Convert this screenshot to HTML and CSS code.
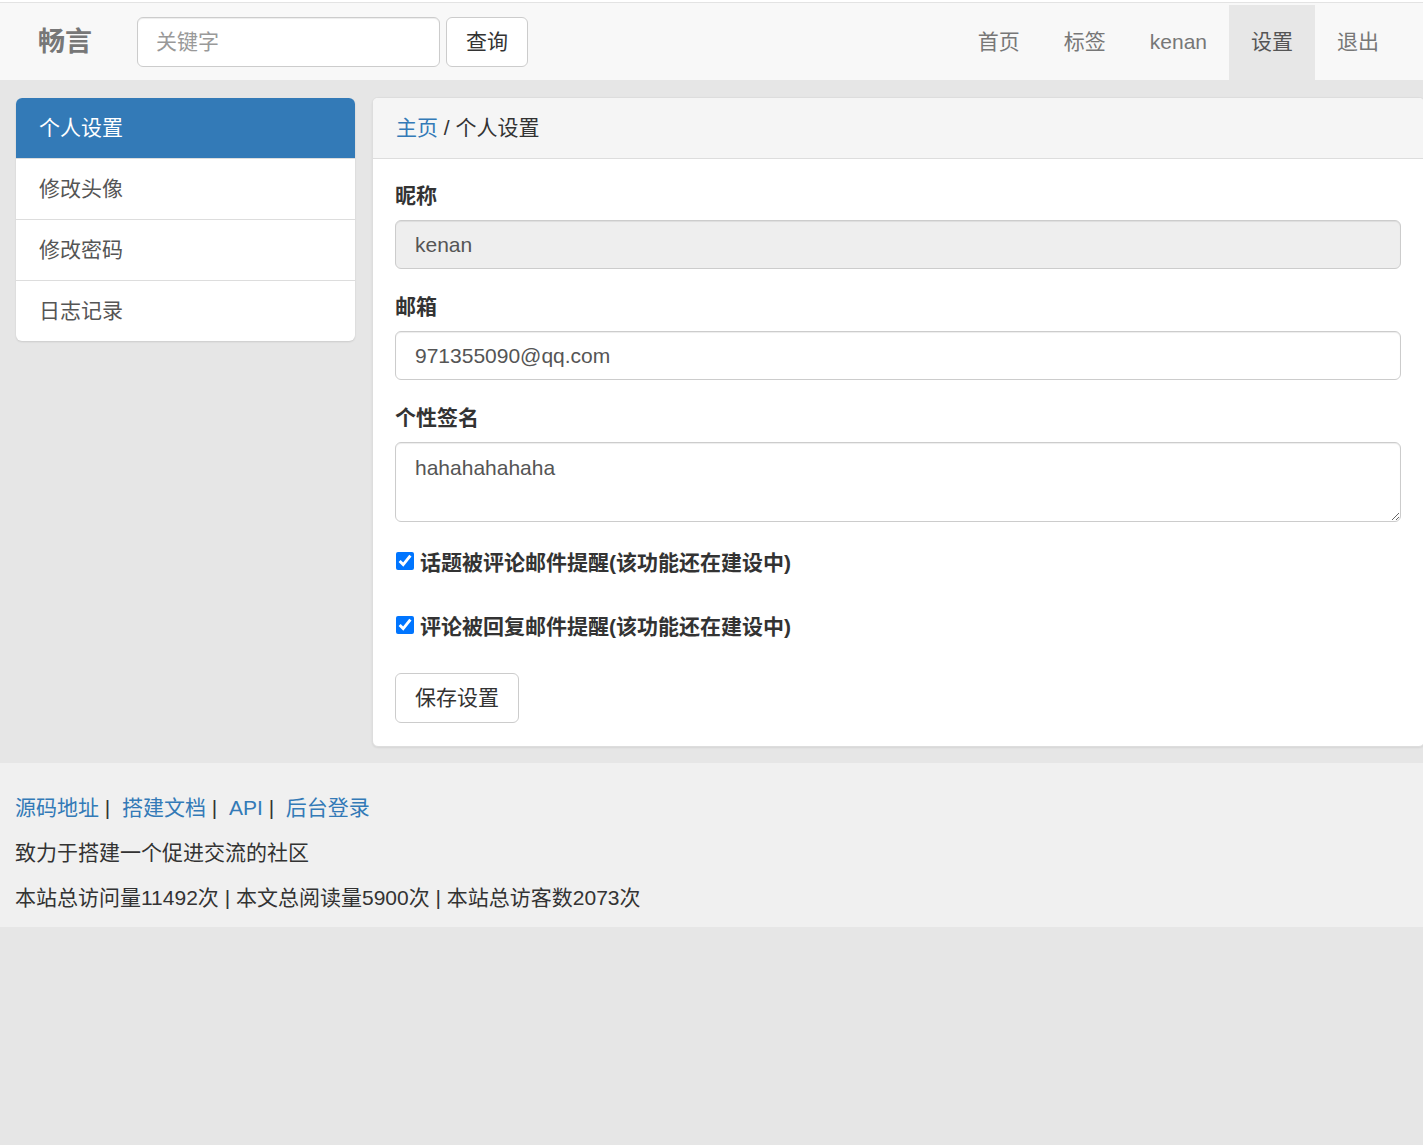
FILE: index.html
```html
<!DOCTYPE html>
<html lang="zh-CN">
<head>
<meta charset="utf-8">
<title>畅言 - 个人设置</title>
<link rel="stylesheet" href="styles.css">
</head>
<body>
<div class="topline"></div>
<nav class="navbar">
  <a class="brand" href="#">畅言</a>
  <form class="search">
    <input class="search-input" type="text" placeholder="关键字">
    <button class="btn" type="button">查询</button>
  </form>
  <ul class="nav">
    <li><a href="#">首页</a></li>
    <li><a href="#">标签</a></li>
    <li><a href="#">kenan</a></li>
    <li class="active"><a href="#">设置</a></li>
    <li><a href="#">退出</a></li>
  </ul>
</nav>

<main class="main">
  <aside class="list-group">
    <a class="list-item active" href="#">个人设置</a>
    <a class="list-item" href="#">修改头像</a>
    <a class="list-item" href="#">修改密码</a>
    <a class="list-item" href="#">日志记录</a>
  </aside>
  <section class="panel">
    <div class="panel-heading"><a href="#">主页</a> / 个人设置</div>
    <div class="panel-body">
      <div class="form-group">
        <label class="label">昵称</label>
        <input class="form-control" type="text" value="kenan" disabled>
      </div>
      <div class="form-group">
        <label class="label">邮箱</label>
        <input class="form-control" type="text" value="971355090@qq.com">
      </div>
      <div class="form-group group-last">
        <label class="label">个性签名</label>
        <textarea class="form-control textarea">hahahahahaha</textarea>
      </div>
      <label class="checkbox"><input type="checkbox" checked>话题被评论邮件提醒(该功能还在建设中)</label>
      <label class="checkbox"><input type="checkbox" checked>评论被回复邮件提醒(该功能还在建设中)</label>
      <button class="btn save" type="button">保存设置</button>
    </div>
  </section>
</main>

<footer class="footer">
  <p><a href="#">源码地址</a>&nbsp;|&nbsp; <a href="#">搭建文档</a>&nbsp;|&nbsp; <a href="#">API</a>&nbsp;|&nbsp; <a href="#">后台登录</a></p>
  <p>致力于搭建一个促进交流的社区</p>
  <p>本站总访问量11492次 | 本文总阅读量5900次 | 本站总访客数2073次</p>
</footer>
</body>
</html>
```

FILE: styles.css
```css
* { box-sizing: border-box; }
html, body {
  margin: 0;
  padding: 0;
}
body {
  background: #e6e6e6;
  font-family: "Liberation Sans", "Noto Sans CJK SC", sans-serif;
  font-size: 21px;
  line-height: 28px;
  color: #333;
  overflow-x: hidden;
}
a { text-decoration: none; color: #337ab7; }

.topline {
  height: 2px;
  background: #fff;
}
.navbar {
  height: 78px;
  background: #f8f8f8;
  border-top: 1px solid #e3e3e3;
  display: flex;
  align-items: center;
  padding: 0 22px 0 38px;
}
.brand {
  color: #777;
  font-size: 27px;
  font-weight: bold;
  line-height: 30px;
  width: 99px;
}
.search {
  display: flex;
  gap: 6px;
  margin: 0;
}
.search-input {
  width: 303px;
  height: 50px;
  border: 1px solid #ccc;
  border-radius: 6px;
  background: #fff;
  padding: 0 18px;
  font: inherit;
  color: #555;
  box-shadow: inset 0 1px 1px rgba(0,0,0,.075);
}
.search-input::placeholder { color: #999; }
.btn {
  height: 50px;
  padding: 0 19px;
  border: 1px solid #ccc;
  border-radius: 6px;
  background: #fff;
  font: inherit;
  color: #333;
}
.nav {
  list-style: none;
  margin: 0 0 0 auto;
  padding: 0;
  display: flex;
  align-self: flex-end;
  height: 75px;
}
.nav li a {
  display: flex;
  align-items: center;
  height: 75px;
  padding: 0 22px 1px;
  color: #777;
}
.nav li.active a {
  background: #e7e7e7;
  color: #555;
}

.main {
  display: flex;
  align-items: flex-start;
  gap: 17px;
  padding: 17px 0 0 16px;
}
.list-group {
  width: 339px;
  flex: none;
  margin-top: 1px;
  background: #fff;
  border-radius: 6px;
  box-shadow: 0 1px 2px rgba(0,0,0,.12);
  overflow: hidden;
}
.list-item {
  display: block;
  padding: 16px 23px;
  line-height: 28px;
  color: #555;
  border-top: 1px solid #ddd;
}
.list-item:first-child { border-top: none; }
.list-item.active {
  background: #337ab7;
  color: #fff;
  border-color: #337ab7;
}

.panel {
  flex: 1;
  margin-right: -2px;
  background: #fff;
  border: 1px solid #ddd;
  border-radius: 6px;
  box-shadow: 0 1px 2px rgba(0,0,0,.08);
  overflow: hidden;
}
.panel-heading {
  background: #f5f5f5;
  border-bottom: 1px solid #ddd;
  padding: 16px 23px;
  line-height: 28px;
  color: #333;
}
.panel-body {
  padding: 23px 23px 23px 22px;
}
.form-group { margin-bottom: 24px; }
.group-last { margin-bottom: 27px; }
.label {
  display: block;
  font-weight: bold;
  margin-bottom: 10px;
  line-height: 28px;
}
.form-control {
  display: block;
  width: 100%;
  height: 49px;
  border: 1px solid #ccc;
  border-radius: 6px;
  padding: 0 19px;
  font: inherit;
  color: #555;
  background: #fff;
  box-shadow: inset 0 1px 1px rgba(0,0,0,.075);
}
.form-control:disabled {
  background: #eee;
  color: #555;
  opacity: 1;
}
.textarea {
  height: 80px;
  padding: 11px 19px;
  line-height: 28px;
  resize: vertical;
}
.checkbox {
  display: flex;
  align-items: center;
  font-weight: bold;
  line-height: 28px;
  margin-bottom: 36px;
}
.checkbox input {
  width: 18px;
  height: 18px;
  margin: 0 6px 4px 1px;
  accent-color: #0075ff;
}
.save { margin-top: -4px; }

.footer {
  margin-top: 16px;
  background: #f0f0f0;
  padding: 31px 15px 15px;
}
.footer p {
  margin: 0 0 17px;
  line-height: 28px;
}
.footer p:last-child { margin-bottom: 0; }
```
